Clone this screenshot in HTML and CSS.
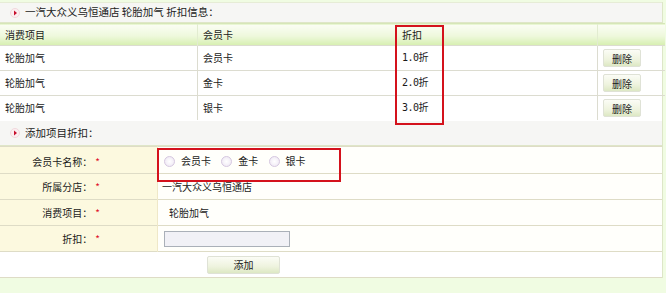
FILE: index.html
```html
<!DOCTYPE html>
<html lang="zh-CN">
<head>
  <meta charset="UTF-8" />
  <title>折扣信息</title>
  <link rel="stylesheet" href="styles.css">
</head>
<body>
  <div class="page">
    <div class="caption">
      <svg class="arrow" width="10" height="10" viewBox="0 0 10 10"><circle cx="5" cy="5" r="4.5" fill="#fbeef0" stroke="#f0d8dc"/><path d="M4 2.5 L7 5 L4 7.5 Z" fill="#c8102e"/></svg>
      一汽大众义乌恒通店 轮胎加气 折扣信息：
    </div>

    <table class="list">
      <tr class="head">
        <td class="c1">消费项目</td>
        <td class="c2">会员卡</td>
        <td class="c3">折扣</td>
        <td class="c4"></td>
      </tr>
      <tr>
        <td>轮胎加气</td>
        <td>会员卡</td>
        <td class="num">1.0折</td>
        <td><button class="btn-del">删除</button></td>
      </tr>
      <tr>
        <td>轮胎加气</td>
        <td>金卡</td>
        <td class="num">2.0折</td>
        <td><button class="btn-del">删除</button></td>
      </tr>
      <tr>
        <td>轮胎加气</td>
        <td>银卡</td>
        <td class="num">3.0折</td>
        <td><button class="btn-del">删除</button></td>
      </tr>
    </table>

    <div class="caption caption-add">
      <svg class="arrow" width="10" height="10" viewBox="0 0 10 10"><circle cx="5" cy="5" r="4.5" fill="#fbeef0" stroke="#f0d8dc"/><path d="M4 2.5 L7 5 L4 7.5 Z" fill="#c8102e"/></svg>
      添加项目折扣：
    </div>

    <table class="form">
      <tr class="first">
        <td class="label">会员卡名称：<span class="req">*</span></td>
        <td class="value">
          <label class="radio"><span class="dot"></span>会员卡</label>
          <label class="radio"><span class="dot"></span>金卡</label>
          <label class="radio"><span class="dot"></span>银卡</label>
        </td>
      </tr>
      <tr>
        <td class="label">所属分店：<span class="req">*</span></td>
        <td class="value shop">一汽大众义乌恒通店</td>
      </tr>
      <tr>
        <td class="label">消费项目：<span class="req">*</span></td>
        <td class="value item">轮胎加气</td>
      </tr>
      <tr>
        <td class="label">折扣：<span class="req">*</span></td>
        <td class="value"><input type="text" class="field"></td>
      </tr>
      <tr>
        <td colspan="2" class="actions"><button class="btn-add">添加</button></td>
      </tr>
    </table>
  </div>

  <!-- annotation boxes -->
  <div class="mark mark-discount"></div>
  <div class="mark mark-card"></div>
</body>
</html>
```

FILE: styles.css
```css
body {
  margin: 0;
  background: #f0fce2;
  font-family: "Noto Sans CJK SC", "Liberation Sans", sans-serif;
  font-size: 10px;
  line-height: 1;
  color: #1a1a1a;
}

.page {
  width: 662px;
  background: #fff;
  border-right: 1px solid #dde6c8;
}

.caption {
  height: 19px;
  margin-top: 2px;
  display: flex;
  align-items: center;
  gap: 5px;
  padding-left: 10px;
  background: #f6f6f4;
  border-top: 1px solid #e6ecd6;
  border-bottom: 1px solid #dfe6c8;
  font-size: 10.5px;
}

.caption-add {
  height: 24px;
  margin-top: 1px;
  border-top: none;
}

.arrow {
  flex: none;
}

table {
  width: 662px;
  border-collapse: collapse;
  table-layout: fixed;
}

.list td {
  height: 24px;
  padding: 0 0 0 5px;
  border-top: 1px solid #dcdcd0;
  border-left: 1px solid #dcdcd0;
  white-space: nowrap;
}

.list td:first-child {
  border-left: none;
}

.list .c1 { width: 192px; }
.list .c2 { width: 193px; }
.list .c3 { width: 195px; }
.list .c4 { width: 62px; }

.list .head td {
  height: 21px;
  border-top: 1px solid #d6e6b8;
  border-left-color: #e2ecd0;
  background: linear-gradient(#fbfdf4, #eef8dc 55%, #d6efb0);
}

.num {
  font-family: "DejaVu Sans Mono", "Liberation Mono", "Noto Sans CJK SC", monospace;
  letter-spacing: -0.5px;
}

.btn-del,
.btn-add {
  font-family: "Noto Sans CJK SC", sans-serif;
  font-size: 10px;
  color: #1a1a1a;
  border: 1px solid #dfe2d6;
  border-radius: 2px;
  background: linear-gradient(#fbfcf6, #eef3de 60%, #dde8c4);
  padding: 0;
}

.btn-del {
  width: 38px;
  height: 18px;
  vertical-align: middle;
}

.form td {
  height: 25px;
  padding: 0;
  border-top: 1px solid #dedcc6;
  white-space: nowrap;
}

.form .first td {
  height: 23px;
  padding-top: 3px;
}

.form .label {
  width: 100px;
  padding-right: 57px;
  text-align: right;
  background: #fcf9df;
  border-right: 1px solid #efe8c8;
}

.req {
  color: #e0102a;
  margin-left: 3px;
}

.form .value {
  padding-left: 6px;
  background: #fffffb;
}

.form .value.shop {
  padding-left: 4px;
}

.form .value.item {
  padding-left: 11px;
}

.radio {
  display: inline-flex;
  align-items: center;
  margin-right: 8px;
}

.dot {
  width: 9px;
  height: 9px;
  margin-right: 6px;
  border-radius: 50%;
  border: 1px solid #d6c8e0;
  background: radial-gradient(#fff, #ece4f2);
}

.field {
  width: 126px;
  height: 16px;
  box-sizing: border-box;
  border: 1px solid #aab0b8;
  background: #f1f1f6;
  margin: 0;
  padding: 0;
  vertical-align: middle;
}

.form .actions {
  height: 25px;
  text-align: left;
  padding-left: 207px;
  background: #fff;
  border-bottom: 1px solid #dedcc6;
}

.btn-add {
  width: 73px;
  height: 18px;
  vertical-align: middle;
}

.mark {
  position: absolute;
  border: 2px solid #d4121c;
  box-sizing: border-box;
}

.mark-discount {
  left: 395px;
  top: 25px;
  width: 49px;
  height: 100px;
}

.mark-card {
  left: 157px;
  top: 148px;
  width: 184px;
  height: 34px;
}
```
